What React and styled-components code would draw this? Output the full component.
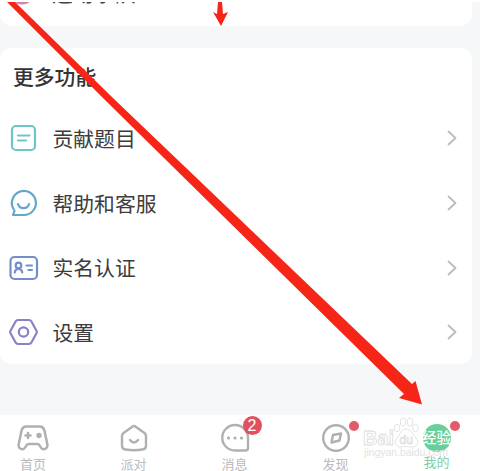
import styled, { createGlobalStyle } from 'styled-components';

const GlobalStyle = createGlobalStyle`
  * {
    box-sizing: border-box;
  }
  body {
    margin: 0;
    background: #fff;
    font-family: 'Noto Sans CJK SC', sans-serif;
  }
`;

const Page = styled.div`
  position: relative;
  display: flex;
  flex-direction: column;
  width: 480px;
  height: 471px;
  padding-top: 2px;
  overflow: hidden;
`;

const Content = styled.main`
  flex: 1;
  display: flex;
  flex-direction: column;
  gap: 22px;
  padding-right: 8px;
  background: #f6f7f9;
`;

const Card = styled.section`
  background: #fff;
  border-radius: 12px;
`;

const CutCard = styled(Card)`
  display: flex;
  align-items: flex-end;
  height: 24px;
  padding: 0 0 21px 9px;
  overflow: hidden;
  border-radius: 0 0 12px 12px;
`;

const CutLabel = styled.span`
  margin: 0 0 2px 15px;
  font-size: 20.8px;
  line-height: 20px;
  color: #444;
`;

const MoreCard = styled(Card)`
  height: 316px;
  padding: 12px 14px 0 9px;
`;

const Title = styled.h2`
  margin: 0 0 14px 4px;
  font-size: 20.8px;
  font-weight: 500;
  line-height: 32px;
  color: #333;
`;

const Row = styled.div`
  display: flex;
  align-items: center;
  height: 64.7px;
  color: #3c3c3c;
  font-size: 20.8px;

  span {
    flex: 1;
    margin: -1px 0 0 13.5px;
  }
`;

const Icon = styled.svg`
  display: block;
  flex: none;
  fill: none;
  stroke: ${props => props.$color || '#b0b0b0'};
  stroke-width: ${props => props.$weight || 2.2};
  stroke-linecap: round;
  stroke-linejoin: round;
`;

const TabBar = styled.nav`
  display: flex;
  height: 56px;
  padding-top: 7px;
  background: #fff;
`;

const Tab = styled.div`
  display: flex;
  flex-direction: column;
  align-items: center;
  width: 101px;
  flex: none;
  color: ${props => (props.$active ? '#80cda6' : '#bababa')};
  font-size: 13px;
  line-height: 20px;

  &:first-child {
    width: 66px;
    margin-right: 17px;
  }
`;

const IconBox = styled.div`
  position: relative;
  height: 35px;
`;

const Badge = styled.b`
  position: absolute;
  top: -6px;
  left: 23px;
  width: 19px;
  height: 19px;
  border-radius: 50%;
  background: #e2505e;
  color: #fff;
  font: 16px/19px 'Liberation Sans', sans-serif;
  text-align: center;
`;

const Dot = styled.i`
  position: absolute;
  top: -1px;
  left: 28px;
  width: 10px;
  height: 10px;
  border-radius: 50%;
  background: #e35a69;
`;

const ActiveDisc = styled.div`
  width: 28px;
  height: 28px;
  margin: 2px 1px 0;
  border-radius: 50%;
  background: #68cf9b;
`;

const Overlay = styled.svg`
  position: absolute;
  inset: 0;
  pointer-events: none;
`;

const icons = {
  note: (
    <Icon width="30" height="30" $color="#6cc6c5">
      <rect x="3" y="3" width="23" height="24" rx="4" />
      <path d="M9 12.5H20.5M9 17.5H17" />
    </Icon>
  ),
  smile: (
    <Icon width="30" height="30" $color="#65a6cd">
      <path d="M4.8 21.5A12 12 0 1 1 14.5 27H4L5.5 22.8M9 16C10.5 21.5 18.5 21.5 20 16" />
    </Icon>
  ),
  card: (
    <Icon width="30" height="30" $color="#748fc7">
      <rect x="1.5" y="4" width="26.5" height="22" rx="4" />
      <circle cx="9.5" cy="12.5" r="2.8" />
      <path d="M5.8 19.5Q6 16 9.5 16T13.2 19.5M17.5 12.5H23M19.5 17H23" />
    </Icon>
  ),
  hexagon: (
    <Icon width="30" height="30" $color="#8c80c8">
      <path d="M9 3H20Q21.5 3 22.3 4.3L27.6 14Q28 15 27.6 16L22.3 25.7Q21.5 27 20 27H9Q7.5 27 6.7 25.7L1.4 16Q1 15 1.4 14L6.7 4.3Q7.5 3 9 3Z" />
      <circle cx="14.5" cy="15" r="4.7" />
    </Icon>
  ),
};

const rows = [
  { icon: 'note', label: '贡献题目' },
  { icon: 'smile', label: '帮助和客服' },
  { icon: 'card', label: '实名认证' },
  { icon: 'hexagon', label: '设置' },
];

const Chevron = () => (
  <Icon width="12" height="18" $color="#bcbcbc" $weight={1.8}>
    <path d="M2.5 2.5L9.5 9L2.5 15.5" />
  </Icon>
);

const App = () => (
  <Page>
    <GlobalStyle />
    <Content>
      <CutCard>
        <Icon width="28" height="28" $color="#d583ae" $weight={3}>
          <circle cx="13" cy="14" r="12" fill="#e5aac8" />
        </Icon>
        <CutLabel>运动乐队</CutLabel>
      </CutCard>
      <MoreCard>
        <Title>更多功能</Title>
        {rows.map(row => (
          <Row key={row.label}>
            {icons[row.icon]}
            <span>{row.label}</span>
            <Chevron />
          </Row>
        ))}
      </MoreCard>
    </Content>

    <TabBar>
      <Tab>
        <IconBox>
          <Icon width="32" height="32" $weight={2.5}>
            <path d="M9 4.5H23Q26 4.5 27.3 8L30.3 22C31 26 28.5 27.5 26 27.2C23 27 23.5 22 20.5 22H11.5C8.5 22 9 27 6 27.2C3.5 27.5 1 26 1.7 22L4.7 8Q6 4.5 9 4.5Z" />
            <path d="M8.5 13.5H13.5M11 11V16" />
            <circle cx="22" cy="13.5" r="1.4" fill="#b0b0b0" />
          </Icon>
        </IconBox>
        首页
      </Tab>
      <Tab>
        <IconBox>
          <Icon width="30" height="32" $weight={2.4}>
            <path d="M13 5Q15 3.2 17 5L25.5 11Q27 12.2 27 14V24Q27 27 23.5 27.5Q15 29 6.5 27.5Q3 27 3 24V14Q3 12.2 4.5 11ZM11 18Q15 23 19 18" />
          </Icon>
        </IconBox>
        派对
      </Tab>
      <Tab>
        <IconBox>
          <Icon width="30" height="32" $weight={2.4}>
            <path d="M15 3A12.7 12.7 0 0 0 15 28.5H25.5Q28 28.5 28 26V16A13 13 0 0 0 15 3Z" />
            <path d="M8.5 16H8.6M15 16H15.1M21.5 16H21.6" strokeWidth="3.2" />
          </Icon>
          <Badge>2</Badge>
        </IconBox>
        消息
      </Tab>
      <Tab>
        <IconBox>
          <Icon width="30" height="32" $weight={2.4}>
            <circle cx="15" cy="16" r="12.8" />
            <path d="M12 13L20 11.5L18.5 18.5L10.5 20.5Z" />
          </Icon>
          <Dot />
        </IconBox>
        发现
      </Tab>
      <Tab $active>
        <IconBox>
          <ActiveDisc />
          <Dot />
        </IconBox>
        我的
      </Tab>
    </TabBar>

    <Overlay width="480" height="471">
      <g fill="#fff" stroke="#dcdcdc" strokeWidth="0.8" fontFamily="Liberation Sans, sans-serif">
        <text x="363" y="445" fontSize="20" fontWeight="bold" textLength="31" lengthAdjust="spacingAndGlyphs">
          Bai
        </text>
        <ellipse cx="397" cy="428" rx="2.8" ry="3.8" />
        <ellipse cx="403" cy="422" rx="2.8" ry="4" />
        <ellipse cx="410" cy="422" rx="2.8" ry="4" />
        <ellipse cx="415.5" cy="428" rx="2.8" ry="3.8" />
        <path d="M406 429C401 429 400 435 397 438C393 442 396 448 401 447Q406 446 411 447C417 448 420 442 416 438C413 435 411 429 406 429Z" />
        <text x="399.5" y="444" fontSize="12" strokeWidth="0.7">
          du
        </text>
        <text x="364" y="456" fontSize="10.5" stroke="none" fill="#e2e2e2" textLength="84">
          jingyan.baidu.com
        </text>
      </g>
      <text x="422" y="443" fill="#fff" fontFamily="Noto Sans CJK SC, sans-serif" fontSize="14.5" fontWeight="500">
        经验
      </text>
      <path d="M7 2H15L114 99L412 384L415.5 381L422 404.5L399 398L404 394L105 100Z" fill="#f52618" />
      <path d="M218 2H222L223 14L228 12L221 26L213 12L217 14Z" fill="#f52618" />
    </Overlay>
  </Page>
);

export default App;
